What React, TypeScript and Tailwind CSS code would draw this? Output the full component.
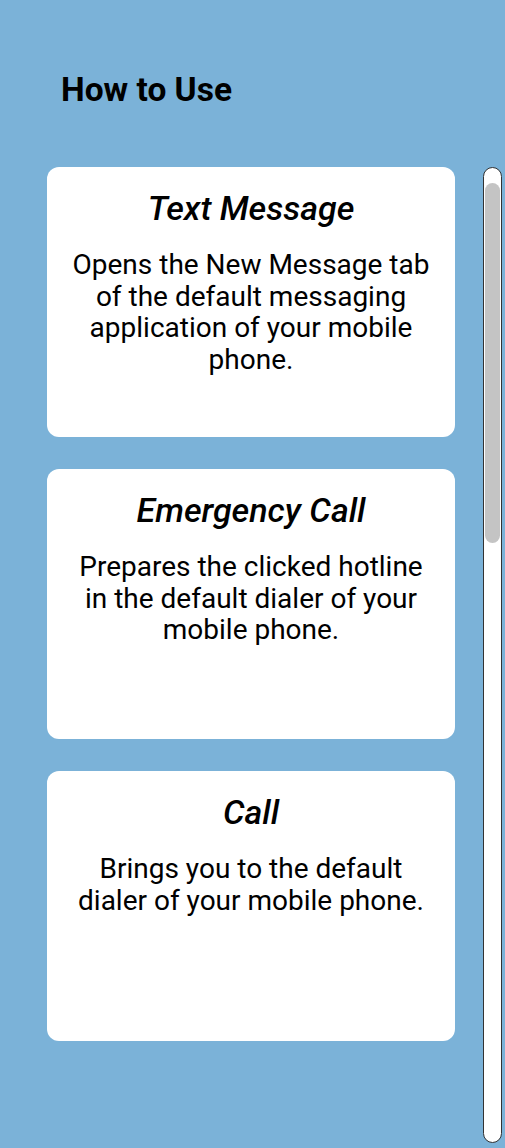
import React from "react";

interface UsageItem {
  title: string;
  description: string;
}

const items: UsageItem[] = [
  {
    title: "Text Message",
    description:
      "Opens the New Message tab of the default messaging application of your mobile phone.",
  },
  {
    title: "Emergency Call",
    description:
      "Prepares the clicked hotline in the default dialer of your mobile phone.",
  },
  {
    title: "Call",
    description: "Brings you to the default dialer of your mobile phone.",
  },
];

const UsageCard: React.FC<{ item: UsageItem }> = ({ item }) => {
  return (
    <div className="h-[270px] rounded-[12px] bg-white px-[22px] pt-[21px] text-center text-black">
      <h3 className="text-[34px] leading-[40px] italic font-medium">
        {item.title}
      </h3>
      <p className="mt-[21px] text-[28px] leading-[31.7px]">
        {item.description}
      </p>
    </div>
  );
};

export default function App() {
  return (
    <div
      className="flex h-[1148px] w-full flex-col bg-[#7bb2d8]"
      style={{ fontFamily: "Roboto, 'Noto Sans', sans-serif" }}
    >
      <header className="pl-[61px] pt-[71px]">
        <h1 className="text-[33.5px] leading-[38px] font-bold text-black">
          How to Use
        </h1>
      </header>
      <div className="mt-[58px] flex flex-1 pb-[5px]">
        <div className="ml-[47px] flex w-[408px] flex-col gap-[32px]">
          {items.map((item, index) => (
            <UsageCard key={index} item={item} />
          ))}
        </div>
        <div className="ml-[28px] w-[19px] rounded-full border border-[#333] bg-white px-[1px] pt-[15px]">
          <div className="h-[360px] rounded-full bg-[#c4c4c4]" />
        </div>
      </div>
    </div>
  );
}
